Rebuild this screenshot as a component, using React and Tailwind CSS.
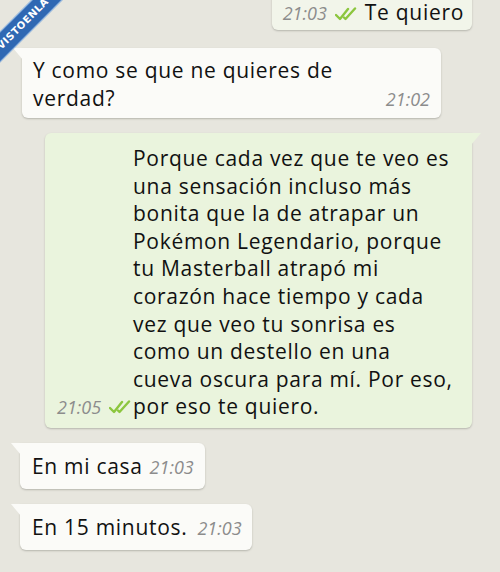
import React from 'react';

function Checks() {
  return (
    <svg width="22" height="14" viewBox="0 0 22 14" className="shrink-0">
      <path d="M1 8 L5 12 L13 2" fill="none" stroke="#8cc63e" strokeWidth="2.4" strokeLinecap="round" strokeLinejoin="round" />
      <path d="M9 10.5 L10.5 12 L20 1.5" fill="none" stroke="#8cc63e" strokeWidth="2.4" strokeLinecap="round" strokeLinejoin="round" />
    </svg>
  );
}

function Time({ children }) {
  return <span className="block text-[18px] leading-[22px] italic text-[#8c8c8c] tracking-[0px]">{children}</span>;
}

const longLines = [
  'Porque cada vez que te veo es',
  'una sensación incluso más',
  'bonita que la de atrapar un',
  'Pokémon Legendario, porque',
  'tu Masterball atrapó mi',
  'corazón hace tiempo y cada',
  'vez que veo tu sonrisa es',
  'como un destello en una',
  'cueva oscura para mí. Por eso,',
  'por eso te quiero.',
];

function InTail() {
  return (
    <span className="absolute -left-[9px] top-0 w-0 h-0 border-t-[12px] border-t-[#fbfbf8] border-l-[10px] border-l-transparent" />
  );
}

function OutTail({ color }) {
  return (
    <span className={`absolute -right-[9px] top-0 w-0 h-0 border-t-[12px] ${color} border-r-[10px] border-r-transparent`} />
  );
}

export default function App() {
  return (
    <div className="relative w-[500px] h-[572px] overflow-hidden bg-[#e7e6de] font-['Open_Sans',sans-serif] text-[21px] tracking-[0.7px] leading-[28px] text-[#111]">
      <div className="flex flex-col">
        {/* sent: Te quiero */}
        <div className="self-end mr-[28px] -mt-[4px] relative">
          <div className="flex items-end gap-[8px] pl-[11px] pr-[8px] pt-[2px] pb-[4px] bg-[#f2f5ea] rounded-b-[6px] shadow-[0_1px_2px_#b5b5ad]">
            <div className="pb-[2px]"><Time>21:03</Time></div>
            <div className="pb-[5px]"><Checks /></div>
            <span>Te quiero</span>
          </div>
        </div>

        {/* received */}
        <div className="ml-[22px] mt-[18px] w-[419px] relative">
          <InTail />
          <div className="bg-[#fbfbf8] rounded-[6px] rounded-tl-none shadow-[0_1px_2px_#b5b5ad] pl-[11px] pr-[11px] pt-[8px] pb-[6px]">
            <p>Y como se que ne quieres de</p>
            <div className="flex items-end justify-between">
              <p>verdad?</p>
              <div className="pb-[2px]"><Time>21:02</Time></div>
            </div>
          </div>
        </div>

        {/* sent long */}
        <div className="ml-[45px] mt-[15px] w-[427px] relative">
          <OutTail color="border-t-[#eaf4dd]" />
          <div className="flex items-end bg-[#eaf4dd] rounded-[6px] rounded-tr-none shadow-[0_1px_2px_#b5b5ad] pl-[12px] pt-[12px] pb-[7px]">
            <div className="flex items-center gap-[8px] w-[76px] pb-[3px]">
              <Time>21:05</Time>
              <Checks />
            </div>
            <div className="leading-[27.6px]">
              {longLines.map((l) => (
                <p key={l} className="whitespace-nowrap">{l}</p>
              ))}
            </div>
          </div>
        </div>

        {/* received short */}
        <div className="ml-[20px] mt-[15px] self-start relative">
          <InTail />
          <div className="flex items-end gap-[7px] bg-[#fbfbf8] rounded-[6px] rounded-tl-none shadow-[0_1px_2px_#b5b5ad] pl-[12px] pr-[11px] pt-[9px] pb-[9px]">
            <span>En mi casa</span>
            <div className="pb-[2px]"><Time>21:03</Time></div>
          </div>
        </div>

        <div className="ml-[20px] mt-[15px] self-start relative">
          <InTail />
          <div className="flex items-end gap-[10px] bg-[#fbfbf8] rounded-[6px] rounded-tl-none shadow-[0_1px_2px_#b5b5ad] pl-[12px] pr-[10px] pt-[9px] pb-[9px]">
            <span>En 15 minutos.</span>
            <div className="pb-[2px]"><Time>21:03</Time></div>
          </div>
        </div>
      </div>

      {/* watermark ribbon */}
      <div className="absolute left-[-27px] top-[13px] w-[100px] h-[22px] bg-[#2f68b3] border-y border-[#9fc0e6] -rotate-45 flex items-center justify-center">
        <span className="text-[10px] leading-none font-bold text-white tracking-[0.5px] font-['DejaVu_Sans',sans-serif]">VISTOENLA</span>
      </div>
    </div>
  );
}
